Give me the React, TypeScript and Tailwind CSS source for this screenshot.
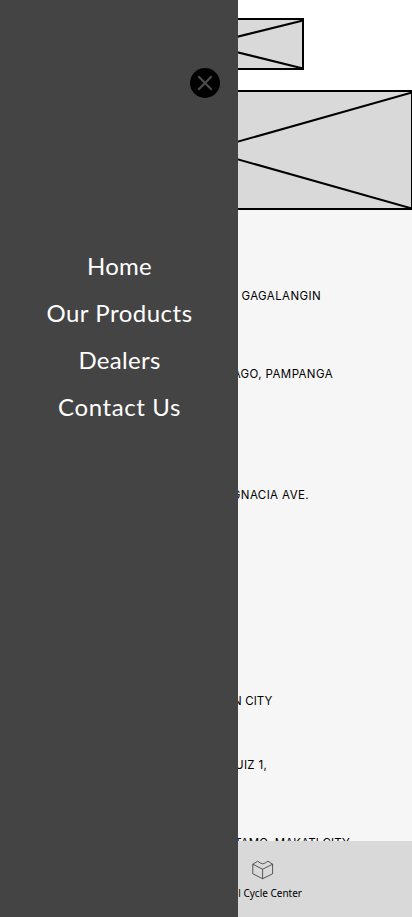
const dealers = [
  { name: 'GAGALANGIN', box: 'top-[287px] w-[321px] tracking-[0.4px]' },
  { name: 'SANTIAGO, PAMPANGA', box: 'top-[365px] w-[333px] tracking-[0.4px]' },
  { name: 'IGNACIA AVE.', box: 'top-[486px] w-[309px] tracking-[0.4px]' },
  { name: 'QUEZON CITY', box: 'top-[692px] w-[272.5px] tracking-[0.1px]' },
  { name: 'RUIZ 1,', box: 'top-[756px] w-[267px] tracking-[0.3px]' },
  { name: 'TAMO, MAKATI CITY', box: 'top-[834px] w-[350px] tracking-[0.15px]' },
];

const links = [
  { label: 'Home', spacing: 'tracking-[0.2px]' },
  { label: 'Our Products', spacing: 'tracking-[0.5px]' },
  { label: 'Dealers', spacing: 'tracking-[0.3px]' },
  { label: 'Contact Us', spacing: 'tracking-[0.6px]' },
];

function Placeholder({ width, height }: { width: number; height: number }) {
  return (
    <svg width={width} height={height} className="block shrink-0 bg-[#d9d9d9]" fill="none" stroke="#000" strokeWidth="2">
      <rect x="1" y="1" width={width - 2} height={height - 2} />
      <path d={`M1 2.5L${width - 1} ${height - 1.5}M1 ${height - 1.5}L${width - 1} 2.5`} />
    </svg>
  );
}

export default function App() {
  return (
    <div className="relative h-[917px] w-[412px] overflow-hidden bg-[#f6f6f6] font-['Noto_Sans',sans-serif] text-black">
      <div className="flex h-full flex-col">
        <header className="flex h-[90px] shrink-0 justify-center bg-white pt-[18px]">
          <Placeholder width={196} height={52} />
        </header>
        <Placeholder width={413} height={120} />
        <main className="min-h-0 flex-1">
          {dealers.map((d) => (
            <p key={d.name} className={`absolute left-0 whitespace-nowrap text-right font-['Inter',sans-serif] text-[11.5px] leading-[18px] ${d.box}`}>
              {d.name}
            </p>
          ))}
        </main>
        <footer className="relative flex h-[76px] shrink-0 flex-col bg-[#d9d9d9] pt-[19px]">
          <svg className="ml-[252px]" width="22" height="20" viewBox="0 0 22 20" fill="none" stroke="#333" strokeWidth="0.8" strokeLinejoin="round">
            <path d="M.8 4.2 10.6 9.2 20.6 4.2V13.8L10.6 18.7.8 13.8ZM10.6 9.2V18.7M.8 4.2 5.7 1.2 8 2.8Q10.7 5 13.5 2.8L16 1.2 20.6 4.2" />
          </svg>
          <p className="mt-[6px] w-[302px] text-right text-[10px] leading-[14px]">Motorcycle General Cycle Center</p>
        </footer>
      </div>

      <aside className="absolute inset-y-0 left-0 w-[238px] bg-[#444]">
        <button aria-label="Close menu" className="ml-[190px] mt-[68px] flex size-[30px] items-center justify-center rounded-full bg-black">
          <svg width="16" height="16" fill="none" stroke="#4c4c4c" strokeWidth="2.2">
            <path d="M1.3 1.3 14.7 14.7M14.7 1.3 1.3 14.7" />
          </svg>
        </button>
        <nav className="mt-[144px] flex flex-col pl-px text-center font-['Lato',sans-serif] text-[24px] leading-[47px] text-white">
          {links.map((l) => (
            <a key={l.label} className={l.spacing}>{l.label}</a>
          ))}
        </nav>
      </aside>
    </div>
  );
}
